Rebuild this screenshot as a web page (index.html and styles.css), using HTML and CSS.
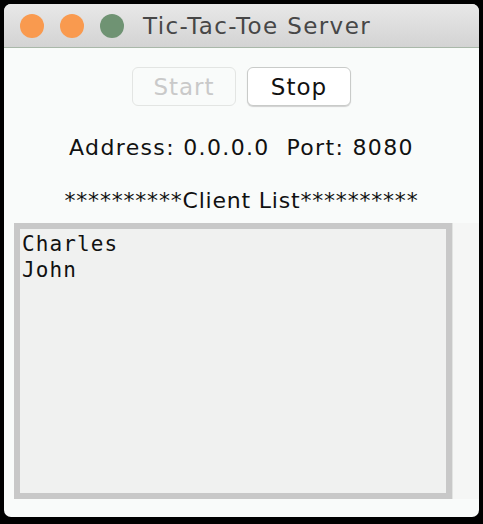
FILE: index.html
```html
<!DOCTYPE html>
<html lang="en">
<head>
    <meta charset="UTF-8">
    <meta name="viewport" content="width=device-width, initial-scale=1.0">
    <title>Tic-Tac-Toe Server</title>
    <link rel="stylesheet" href="styles.css">
</head>
<body>
    <div class="window">
        <div class="titlebar">
            <span class="light orange"></span>
            <span class="light orange"></span>
            <span class="light green"></span>
            <span class="title">Tic-Tac-Toe Server</span>
        </div>
        <div class="content">
            <div class="controls">
                <button class="btn" disabled>Start</button>
                <button class="btn">Stop</button>
            </div>
            <div class="address">Address: 0.0.0.0&nbsp; Port: 8080</div>
            <div class="heading">**********Client List**********</div>
            <div class="list-row">
                <div class="client-list">
                    <div>Charles</div>
                    <div>John</div>
                </div>
                <div class="scroll"></div>
            </div>
        </div>
    </div>
</body>
</html>
```

FILE: styles.css
```css
body {
    margin: 0;
    background-color: #000;
    font-family: "DejaVu Sans", Verdana, sans-serif;
}
.window {
    margin: 4px 4px 7px 4px;
    width: 475px;
    height: 513px;
    border-radius: 7px;
    overflow: hidden;
    background-color: #f9fbfa;
    display: flex;
    flex-direction: column;
}
.titlebar {
    height: 43px;
    border-bottom: 1px solid #a9b8a9;
    background: linear-gradient(#e8e8e8, #d3d3d3);
    display: flex;
    align-items: center;
    padding-left: 16px;
}
.light {
    width: 24px;
    height: 24px;
    border-radius: 50%;
    margin-right: 16px;
}
.orange {
    background-color: #f99a4f;
}
.green {
    background-color: #6f9373;
}
.title {
    margin-left: 3px;
    font-size: 23px;
    letter-spacing: 1.4px;
    color: #474747;
}
.content {
    display: flex;
    flex-direction: column;
    align-items: center;
    flex: 1;
}
.controls {
    margin-top: 19px;
    display: flex;
    gap: 11px;
}
.btn {
    width: 104px;
    height: 39px;
    border-radius: 6px;
    font-family: "DejaVu Sans", Verdana, sans-serif;
    font-size: 23px;
    letter-spacing: 1px;
    color: #111;
    background-color: #fff;
    border: 1px solid #c9cbc9;
    box-shadow: 0 1px 1px #d0d0d0;
}
.btn:disabled {
    color: #c9c9c9;
    background-color: #f9fbfa;
    border-color: #e3e5e3;
    box-shadow: none;
}
.address {
    margin-top: 29px;
    font-size: 22px;
    line-height: 26px;
    letter-spacing: 1.35px;
    color: #111;
}
.heading {
    margin-top: 27px;
    font-size: 22px;
    line-height: 26px;
    letter-spacing: 0.8px;
    color: #111;
}
.list-row {
    align-self: stretch;
    display: flex;
    margin-top: 9px;
    padding-left: 10px;
}
.client-list {
    width: 426px;
    height: 262px;
    border: 6px solid #c8c8c8;
    background-color: #f0f1f0;
    padding-top: 2px;
    padding-left: 2px;
    font-family: "DejaVu Sans Mono", monospace;
    font-size: 21px;
    letter-spacing: 1.1px;
    line-height: 26px;
    color: #111;
}
.scroll {
    width: 26px;
    border-left: 1px solid #e2e4e2;
    background-color: #f5f6f5;
}
```
